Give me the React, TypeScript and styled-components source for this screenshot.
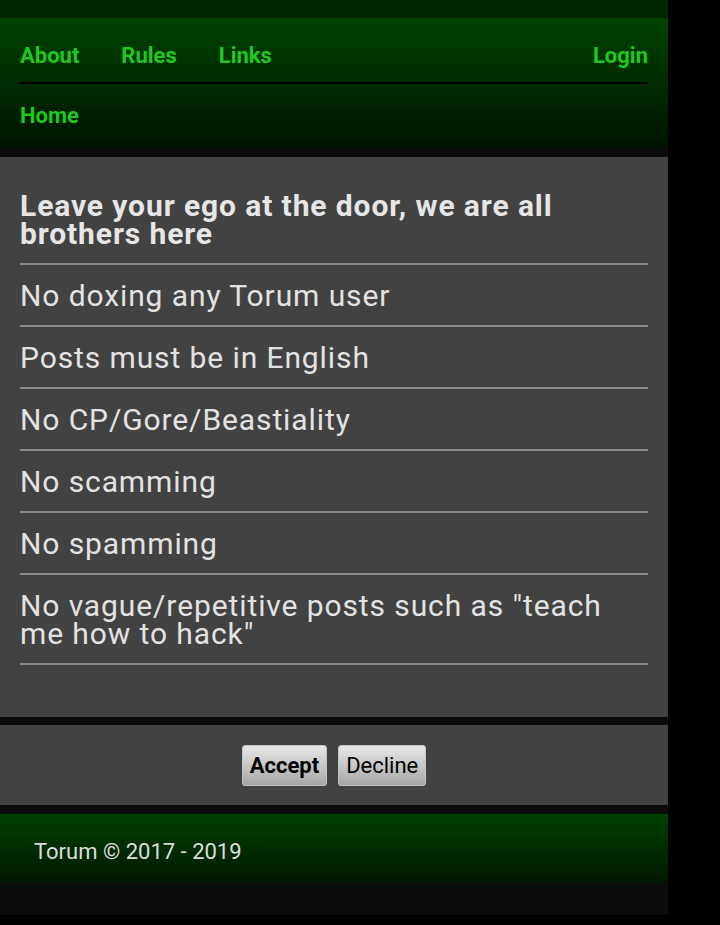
import styled, { createGlobalStyle } from "styled-components";

const GlobalStyle = createGlobalStyle`
    body {
        margin: 0;
        background: #000;
        font-family: Roboto, "Liberation Sans", sans-serif;
    }
`;

const rules = [
    "No doxing any Torum user",
    "Posts must be in English",
    "No CP/Gore/Beastiality",
    "No scamming",
    "No spamming",
    'No vague/repetitive posts such as "teach me how to hack"',
];

const App = () => {
    return (
        <>
            <GlobalStyle />
            <Page>
                <TopStrip />
                <Header>
                    <NavRow>
                        <NavLink href="#">About</NavLink>
                        <NavLink href="#">Rules</NavLink>
                        <NavLink href="#">Links</NavLink>
                        <NavLink href="#" $right>
                            Login
                        </NavLink>
                    </NavRow>
                    <SubRow>
                        <NavLink href="#">Home</NavLink>
                    </SubRow>
                </Header>

                <RulesPanel>
                    <Title>Leave your ego at the door, we are all brothers here</Title>
                    {rules.map((r) => (
                        <RuleItem key={r}>{r}</RuleItem>
                    ))}
                </RulesPanel>

                <ButtonBar>
                    <Button $primary>Accept</Button>
                    <Button>Decline</Button>
                </ButtonBar>

                <Footer>Torum © 2017 - 2019</Footer>
            </Page>
        </>
    );
};

export default App;

const Page = styled.div`
    width: 668px;
    background: #0c0c0c;
    padding-bottom: 32px;
    display: flex;
    flex-direction: column;
`;

const TopStrip = styled.div`
    height: 18px;
    background: #012401;
`;

const Header = styled.div`
    padding: 0 20px;
    background: linear-gradient(#004300, #001300);
    margin-bottom: 9px;
`;

const NavRow = styled.div`
    display: flex;
    gap: 42px;
    padding: 25px 0 13px;
    border-bottom: 2px solid #000;
`;

const SubRow = styled.div`
    display: flex;
    padding: 19px 0 19px;
`;

const NavLink = styled.a<{ $right?: boolean }>`
    font-size: 22px;
    line-height: 26px;
    font-weight: bold;
    color: #1fc71f;
    text-decoration: none;
    margin-left: ${({ $right }) => ($right ? "auto" : "0")};
`;

const RulesPanel = styled.div`
    background: #424242;
    padding: 20px 20px 52px;
    margin-bottom: 8px;
`;

const Title = styled.div`
    font-size: 30px;
    line-height: 28px;
    font-weight: bold;
    letter-spacing: 0.9px;
    color: #e6e6e6;
    padding: 15px 0 15px;
    border-bottom: 2px solid #8a8a8a;
`;

const RuleItem = styled.div`
    font-size: 30px;
    line-height: 28px;
    letter-spacing: 0.9px;
    color: #e2e2e2;
    padding: 17px 0 15px;
    border-bottom: 2px solid #8a8a8a;
`;

const ButtonBar = styled.div`
    background: #424242;
    display: flex;
    justify-content: center;
    gap: 11px;
    padding: 20px 0 19px;
    margin-bottom: 9px;
`;

const Button = styled.button<{ $primary?: boolean }>`
    height: 41px;
    padding: 0 7px;
    border: 1px solid #c4c4c4;
    border-radius: 3px;
    background: linear-gradient(#e8e8e8, #a6a6a6);
    font-family: Roboto, "Liberation Sans", sans-serif;
    font-size: 22px;
    font-weight: ${({ $primary }) => ($primary ? "bold" : "normal")};
    color: #000;
`;

const Footer = styled.div`
    background: linear-gradient(#004000, #001800);
    padding: 25px 34px 18px;
    font-size: 22px;
    line-height: 26px;
    color: #dcdcdc;
`;
